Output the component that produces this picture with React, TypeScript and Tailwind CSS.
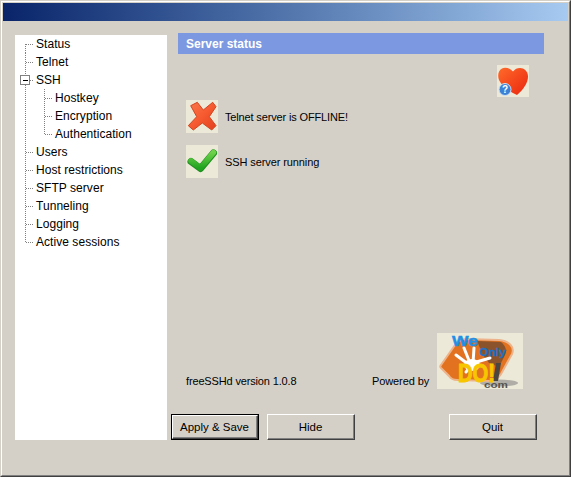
const font = { fontFamily: '"Liberation Sans", Arial, sans-serif' }

const topItems = [
  { label: "Status", kind: "first" },
  { label: "Telnet", kind: "mid" },
  { label: "SSH", kind: "open" },
  { label: "Hostkey", kind: "child" },
  { label: "Encryption", kind: "child" },
  { label: "Authentication", kind: "childLast" },
  { label: "Users", kind: "mid" },
  { label: "Host restrictions", kind: "mid" },
  { label: "SFTP server", kind: "mid" },
  { label: "Tunneling", kind: "mid" },
  { label: "Logging", kind: "mid" },
  { label: "Active sessions", kind: "last" },
]

// dotted connectors for one tree row, 18px high
const TreeLines = ({ kind }: { kind: string }) => {
  const isChild = kind === "child" || kind === "childLast"
  const dots = { stroke: "#808080", strokeWidth: 1, strokeDasharray: "1 1", fill: "none" }
  return (
    <svg width={isChild ? 40 : 21} height={18} className="shrink-0">
      {kind === "first" && <path d="M10.5 9V18" {...dots} />}
      {(kind === "mid" || isChild || kind === "open") && <path d="M10.5 0V18" {...dots} />}
      {kind === "last" && <path d="M10.5 0V9" {...dots} />}
      {!isChild && <path d="M11 9.5H19" {...dots} />}
      {kind === "child" && <path d="M29.5 0V18" {...dots} />}
      {kind === "childLast" && <path d="M29.5 0V9" {...dots} />}
      {isChild && <path d="M30 9.5H38" {...dots} />}
      {kind === "open" && (
        <g>
          <rect x="5.5" y="4.5" width="9" height="9" fill="#fff" stroke="#808080" />
          <path d="M8 9.5H13" stroke="#000" />
          <path d="M29.5 14V18" {...dots} />
        </g>
      )}
    </svg>
  )
}

const CrossIcon = () => (
  <svg width="32" height="33" viewBox="0 0 32 33" className="block bg-[#ece9d8]">
    <defs>
      <linearGradient id="cross" x1="0" y1="0" x2="1" y2="1">
        <stop offset="0" stopColor="#f9794c" />
        <stop offset="0.5" stopColor="#f65a30" />
        <stop offset="1" stopColor="#e2401e" />
      </linearGradient>
    </defs>
    <path
      d="M4.7 5.7 11.3 2.3 17.3 10 26.7 2.3 30 6.7 23.3 16.7 30 25.7 25.7 30 16.3 23 7.3 30 2.3 25.7 10.7 16.7Z"
      fill="url(#cross)"
      stroke="#d2441f"
      strokeWidth="1"
      strokeLinejoin="round"
    />
  </svg>
)

const CheckIcon = () => (
  <svg width="32" height="33" viewBox="0 0 32 33" className="block bg-[#ece9d8]">
    <defs>
      <linearGradient id="check" x1="0" y1="0" x2="0" y2="1">
        <stop offset="0" stopColor="#6fd24a" />
        <stop offset="1" stopColor="#20a320" />
      </linearGradient>
    </defs>
    <path
      d="M5 16.5 14.5 23.5 27.5 8"
      fill="none"
      stroke="#1f8f1f"
      strokeWidth="7"
      strokeLinecap="round"
      strokeLinejoin="round"
    />
    <path
      d="M5 16 14.5 23 27.5 7.5"
      fill="none"
      stroke="url(#check)"
      strokeWidth="5.5"
      strokeLinecap="round"
      strokeLinejoin="round"
    />
  </svg>
)

const HeartIcon = () => (
  <svg width="32" height="32" viewBox="0 0 32 32" className="block bg-[#ece9d8]">
    <defs>
      <linearGradient id="heart" x1="0" y1="0" x2="1" y2="1">
        <stop offset="0" stopColor="#ff6a2a" />
        <stop offset="1" stopColor="#ea260f" />
      </linearGradient>
    </defs>
    <path
      d="M16 6.5C13 3 8 2 5 3.5 1 5.5 .5 11 2 15 5 22 13 27 20 30 26 25 31 18 31 11.5 31 6 27 3 23 3 20 3 18 4 16 6.5Z"
      fill="url(#heart)"
    />
    <circle cx="8" cy="24.5" r="6" fill="#3b82d6" stroke="#cfe0f4" strokeWidth="1" />
    <text x="8" y="28" textAnchor="middle" fontSize="10" fontWeight="700" fill="#fff" style={font}>
      ?
    </text>
  </svg>
)

const LogoIcon = () => (
  <svg width="86" height="56" viewBox="0 0 86 56" className="block bg-[#ece9d8]">
    <ellipse cx="62" cy="50" rx="19" ry="3.5" fill="#b0ada6" />
    <path
      d="M4 32 18 12C21 8 24 6 29 6L62 7C72 8 78 14 75 21L64 41C61 46 58 48 53 48L20 47C16 47 14 46 12 43L4 35C3 34 3 33 4 32Z"
      fill="#e27220"
      stroke="#edb48c"
      strokeWidth="2"
    />
    <path d="M40 8 64 9C69 13 70 18 68 22L62 34 52 30 46 22Z" fill="#6d4a30" opacity="0.75" />
    <path d="M59 30H64L61 48H56Z" fill="#4a4740" />
    <path
      d="M19 22 31 31M27 15 33 30M37 15 36 30M36 30 53 25M36 31 29 39"
      stroke="#fff"
      strokeWidth="3"
      strokeLinecap="round"
      fill="none"
    />
    <ellipse cx="35" cy="32" rx="8" ry="6" fill="#fff" />
    <text x="15" y="13" fontSize="15" fontWeight="700" fill="#1e90e6" stroke="#1e90e6" strokeWidth="0.5" textLength="26" lengthAdjust="spacingAndGlyphs" style={font}>
      We
    </text>
    <text x="42" y="23" fontSize="11" fontWeight="700" fill="#2470c4" stroke="#2470c4" strokeWidth="0.3" textLength="27" lengthAdjust="spacingAndGlyphs" style={font}>
      Only
    </text>
    <text x="21" y="49" fontSize="26" fontWeight="700" fill="#f7c600" stroke="#f7c600" strokeWidth="1" textLength="37" lengthAdjust="spacingAndGlyphs" style={font}>
      DO!
    </text>
    <text x="47" y="55" fontSize="9" fontWeight="700" fill="#55534e" textLength="24" lengthAdjust="spacingAndGlyphs" style={font}>
      com
    </text>
  </svg>
)

const Button = ({ label, isDefault, className }: { label: string; isDefault?: boolean; className?: string }) => (
  <button
    className={`w-[88px] h-[26px] shrink-0 text-[11.5px] text-black bg-[#d4d0c8] ${
      isDefault ? "border border-black" : ""
    } ${className ?? ""}`}
    style={font}
  >
    <span className="block h-full border border-b-[#404040] border-r-[#404040] border-t-white border-l-white">
      <span className="flex h-full items-center justify-center border-b border-r border-[#808080]">{label}</span>
    </span>
  </button>
)

export default function App() {
  return (
    <div
      className="w-[571px] h-[477px] bg-[#d4d0c8] text-[12px] leading-[14px] text-black border border-t-[#d4d0c8] border-l-[#d4d0c8] border-r-[#404040] border-b-[#404040]"
      style={font}
    >
      <div className="h-full flex flex-col p-px border border-t-white border-l-white border-r-[#808080] border-b-[#808080]">
        <div className="h-[18px] shrink-0 bg-gradient-to-r from-[#0a246a] to-[#a6caf0]" />
        <div className="flex-1 flex pl-3 pt-3 pb-[34px] min-h-0">
          <nav className="w-[152px] mt-[2px] shrink-0 bg-white">
            {topItems.map((item) => (
              <div key={item.label} className="flex h-[18px] items-center">
                <TreeLines kind={item.kind} />
                <span className="tracking-[0.05px]">{item.label}</span>
              </div>
            ))}
          </nav>
          <div className="flex-1 flex flex-col min-w-0">
            <div className="h-[21px] ml-[11px] w-[366px] shrink-0 bg-[#7b98e0] pl-2 flex items-center text-white font-bold">
              Server status
            </div>
            <div className="mt-[11px] ml-[330px]">
              <HeartIcon />
            </div>
            <div className="mt-[3px] ml-[19px] flex items-center gap-[7px]">
              <CrossIcon />
              <span className="text-[11px] tracking-[-0.15px]">Telnet server is OFFLINE!</span>
            </div>
            <div className="mt-3 ml-[19px] flex items-center gap-[7px]">
              <CheckIcon />
              <span className="text-[11px] tracking-[-0.1px]">SSH server running</span>
            </div>
            <div className="mt-auto ml-[19px] flex items-end">
              <span className="w-[186px] mb-[1px] text-[11px] tracking-[-0.15px]">freeSSHd version 1.0.8</span>
              <span className="w-[65px] mb-[1px] text-[11px] tracking-[-0.1px]">Powered by</span>
              <LogoIcon />
            </div>
            <div className="mt-[25px] ml-1 flex">
              <Button label="Apply & Save" isDefault />
              <Button label="Hide" className="ml-2" />
              <Button label="Quit" className="ml-[94px]" />
            </div>
          </div>
        </div>
      </div>
    </div>
  )
}
